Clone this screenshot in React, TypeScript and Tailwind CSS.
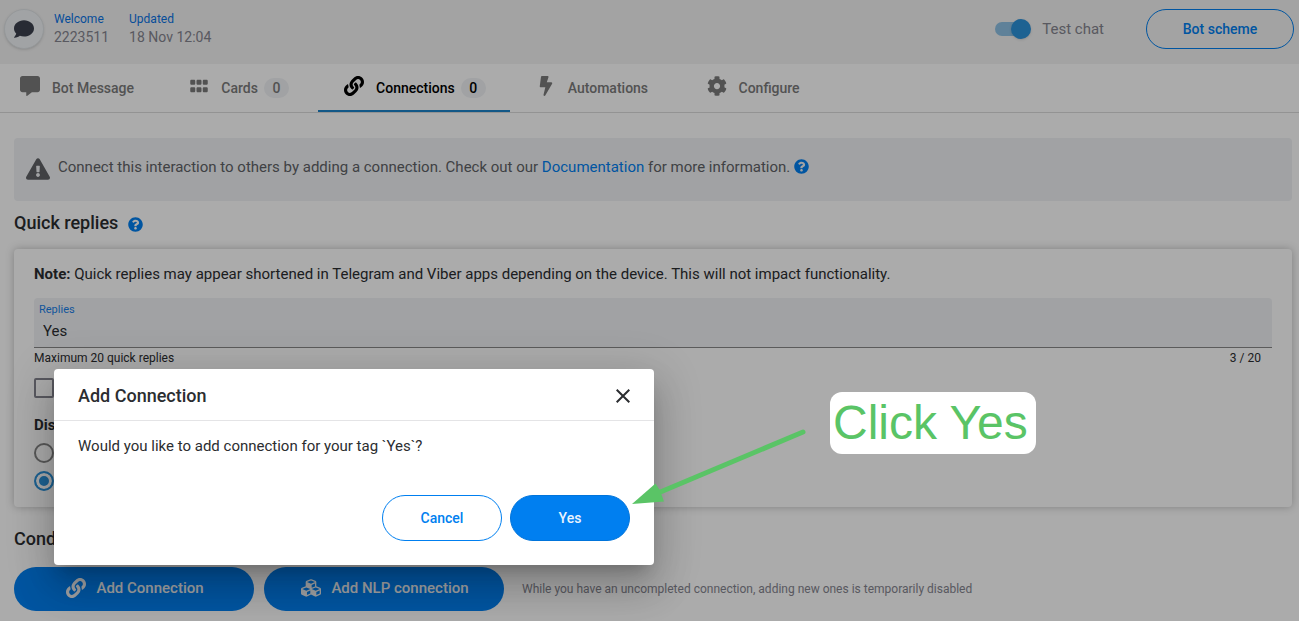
import type { ReactNode } from "react";
import {
  FaBolt,
  FaCog,
  FaComment,
  FaCommentAlt,
  FaCubes,
  FaExclamationTriangle,
  FaGripHorizontal,
  FaLink,
  FaQuestionCircle,
} from "react-icons/fa";

type TabProps = {
  icon: ReactNode;
  label: string;
  count?: number;
  active?: boolean;
  className?: string;
};

function Tab({ icon, label, count, active = false, className = "px-6 min-w-40" }: TabProps) {
  return (
    <button
      type="button"
      role="tab"
      aria-selected={active}
      className={`flex h-12 items-center justify-center gap-2.5 border-b-2 pt-0.5 text-sm font-medium ${className} ${
        active ? "border-[#1d83c9] text-black" : "border-transparent text-[#7b7b7b]"
      }`}
    >
      <span className="flex w-6 justify-center pb-1 text-xl">{icon}</span>
      <span className="flex items-center gap-1.5">
        {label}
        {count !== undefined && (
          <span className="w-[25px] rounded-full bg-[#f0f2f5] text-center leading-5">{count}</span>
        )}
      </span>
    </button>
  );
}

function Header() {
  return (
    <header className="flex h-16 items-start justify-between bg-[#f3f3f3] pt-[9px] pr-[5px] pl-1">
      <div className="flex items-center">
        <div className="flex size-10 items-center justify-center rounded-full border border-[#dfe3e6] bg-[#f0f4f7] text-xl text-[#3d414e] shadow-sm">
          <FaComment />
        </div>
        <div className="ml-2.5 pb-0.5">
          <div className="text-xs leading-[18px] text-[#0a73e6]">Welcome</div>
          <div className="text-sm leading-[18px] text-[#85858f]">2223511</div>
        </div>
        <div className="ml-5 pb-0.5">
          <div className="text-xs leading-[18px] text-[#0a73e6]">Updated</div>
          <div className="text-sm leading-[18px] text-[#85858f]">18 Nov 12:04</div>
        </div>
      </div>
      <div className="flex items-center">
        <label className="flex items-center gap-[11px] text-[15px] text-[#85858f]">
          <span className="relative flex h-5 w-9 items-center">
            <input
              type="checkbox"
              role="switch"
              defaultChecked
              className="h-3.5 w-8 appearance-none rounded-full bg-[#8ec1e4]"
            />
            <span className="absolute right-0 size-5 rounded-full bg-[#2c92da] shadow" />
          </span>
          Test chat
        </label>
        <button
          type="button"
          className="ml-[42px] h-10 w-[148px] rounded-full border border-[#007ff0] text-sm font-medium text-[#007ff0]"
        >
          Bot scheme
        </button>
      </div>
    </header>
  );
}

function QuickReplies() {
  return (
    <section className="rounded-sm bg-white px-5 pt-4 pb-4 shadow-[0_0_8px_rgba(0,0,0,0.25)]">
      <p className="text-[15px] leading-[18px]">
        <b>Note:</b> Quick replies may appear shortened in Telegram and Viber apps depending on the
        device. This will not impact functionality.
      </p>
      <div className="mt-[15px] flex h-[50px] flex-col rounded-t border-b border-[#888] bg-[#f0f2f5] pt-1">
        <label htmlFor="replies" className="pl-[5px] text-[11px] leading-4 text-[#1a80e8]">
          Replies
        </label>
        <input
          id="replies"
          type="text"
          defaultValue="Yes"
          className="h-[26px] w-full bg-transparent px-[9px] text-[15px] outline-none"
        />
      </div>
      <div className="flex justify-between pr-[11px] text-xs leading-5">
        <span>Maximum 20 quick replies</span>
        <span>3 / 20</span>
      </div>
      <input
        type="checkbox"
        aria-label="Option"
        className="mt-2.5 block size-5 appearance-none rounded-xs border-2 border-[#85858f]"
      />
      <div className="mt-4 text-[15px] leading-[22px] font-bold">Display</div>
      <input
        type="radio"
        name="display"
        aria-label="First"
        className="mt-[7px] block size-5 appearance-none rounded-full border-2 border-[#858585]"
      />
      <input
        type="radio"
        name="display"
        aria-label="Second"
        defaultChecked
        className="mt-2 block size-5 appearance-none rounded-full border-2 border-[#2c92da] bg-[#2c92da] shadow-[inset_0_0_0_3px_white]"
      />
    </section>
  );
}

function Annotation() {
  return (
    <>
      <svg
        className="absolute top-[424px] left-[628px]"
        width="184"
        height="88"
        viewBox="628 424 184 88"
        aria-hidden="true"
      >
        <path d="M803 432 658 493" stroke="#5ac466" strokeWidth="5" strokeLinecap="round" />
        <path d="M632 504 655.500 483.500 660 490.500 664 501.500z" fill="#5ac466" />
      </svg>
      <div className="absolute top-[392px] left-[830px] h-[62px] w-[206px] rounded-xl bg-white pl-[3px] font-['Liberation_Sans',sans-serif] text-5xl leading-[62px] whitespace-nowrap text-[#5ac466]">
        Click Yes
      </div>
    </>
  );
}

function ConfirmDialog() {
  return (
    <div
      role="dialog"
      aria-labelledby="dialog-title"
      className="absolute top-[369px] left-[54px] w-[600px] rounded bg-white shadow-[0_11px_15px_-7px_rgba(0,0,0,0.2),0_24px_38px_3px_rgba(0,0,0,0.14),0_9px_46px_8px_rgba(0,0,0,0.12)]"
    >
      <div className="flex h-[52px] items-center justify-between border-b border-[#e4e4e6] px-6 pt-0.5">
        <h2 id="dialog-title" className="text-lg font-medium">
          Add Connection
        </h2>
        <button type="button" aria-label="Close">
          <svg width="14" height="14" viewBox="0 0 14 14" stroke="currentColor" strokeWidth="2">
            <path d="M.7.7l12.600 12.600M13.300.7L.7 13.300" />
          </svg>
        </button>
      </div>
      <p className="px-6 pt-4 text-[15px] leading-[18px]">
        Would you like to add connection for your tag `Yes`?
      </p>
      <div className="flex justify-end gap-2 px-6 pt-10 pb-6 text-sm font-medium">
        <button
          type="button"
          className="h-[46px] w-[120px] rounded-full border border-[#007ff0] text-[#007ff0]"
        >
          Cancel
        </button>
        <button
          type="button"
          className="h-[46px] w-[120px] rounded-full border border-[#0074db] bg-[#007ff0] text-[#e8f3fe]"
        >
          Yes
        </button>
      </div>
    </div>
  );
}

export default function App() {
  return (
    <div className="relative min-h-screen overflow-hidden bg-white font-[Roboto,sans-serif] text-[#2b2d30]">
      <Header />
      <nav role="tablist" className="flex border-b border-[#dcdcdc]">
        <Tab icon={<FaCommentAlt />} label="Bot Message" className="pr-6 pl-[18px]" />
        <Tab icon={<FaGripHorizontal />} label="Cards" count={0} />
        <Tab icon={<FaLink />} label="Connections" count={0} active />
        <Tab icon={<FaBolt />} label="Automations" />
        <Tab icon={<FaCog />} label="Configure" />
      </nav>

      <main className="pt-[25px] pr-[7px] pl-3.5">
        <div className="flex h-[63px] items-center gap-2 rounded bg-[#f0f2f5] px-3 pb-1 text-[15px] text-[#606266]">
          <FaExclamationTriangle className="mt-0.5 text-2xl" />
          <p>
            Connect this interaction to others by adding a connection. Check out our{" "}
            <a href="#" className="text-[#007ff0]">
              Documentation
            </a>{" "}
            for more information.{" "}
            <FaQuestionCircle className="inline align-[-2px] text-[#007ff0]" />
          </p>
        </div>
        <h2 className="flex h-12 items-center gap-2.5 pb-1 text-lg font-medium">
          Quick replies
          <FaQuestionCircle className="mt-0.5 text-[15px] text-[#007ff0]" />
        </h2>
        <QuickReplies />
        <h2 className="flex h-[60px] items-center pt-1 text-lg font-medium">Conditions</h2>
        <div className="flex items-center gap-2.5 pb-2.5">
          <button
            type="button"
            className="flex h-11 w-60 items-center justify-center gap-2.5 rounded-full bg-[#007ff0] pb-0.5 pl-0.5 text-[15px] font-medium text-[#f0f2f5]"
          >
            <FaLink className="text-xl" />
            Add Connection
          </button>
          <button
            type="button"
            className="flex h-11 w-60 items-center justify-center gap-2.5 rounded-full bg-[#007ff0] pb-0.5 pl-0.5 text-[15px] font-medium text-[#f0f2f5]"
          >
            <FaCubes className="text-xl" />
            Add NLP connection
          </button>
          <span className="ml-2 text-xs text-[#85858f]">
            While you have an uncompleted connection, adding new ones is temporarily disabled
          </span>
        </div>
      </main>

      <div className="absolute inset-0 bg-black/33" />
      <ConfirmDialog />
      <Annotation />
    </div>
  );
}
